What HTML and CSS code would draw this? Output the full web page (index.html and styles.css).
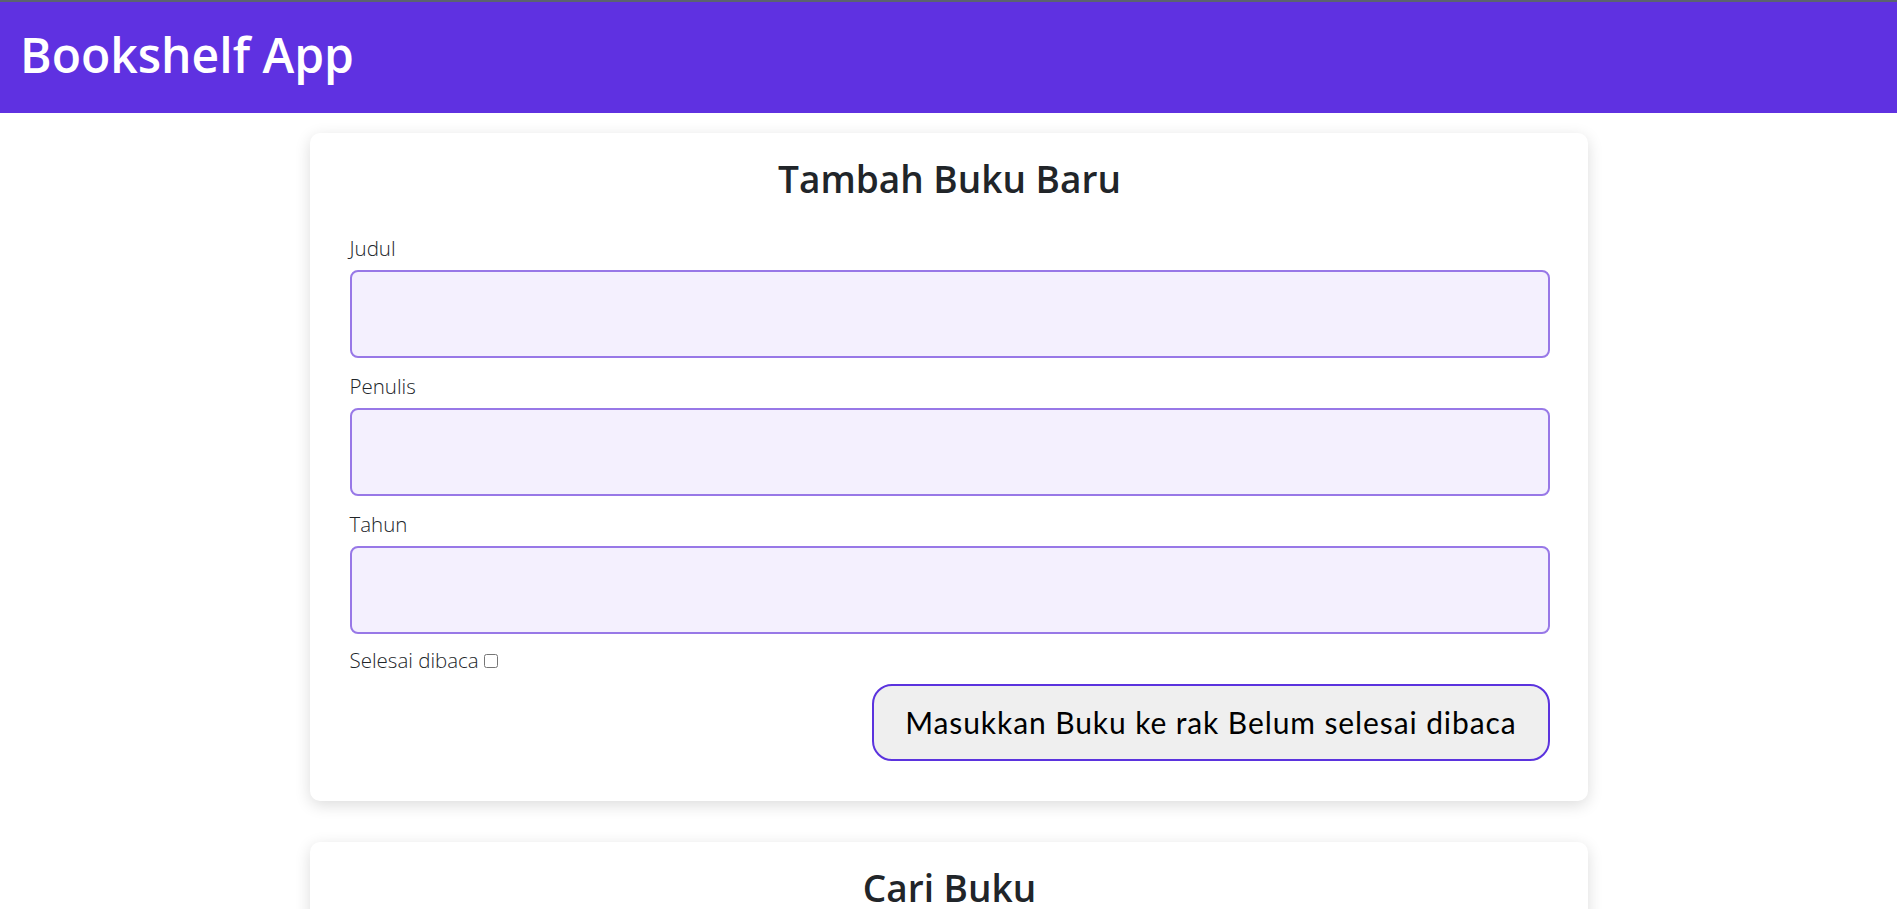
FILE: index.html
```html
<!DOCTYPE html>
<html lang="id">
<head>
<meta charset="utf-8">
<title>Bookshelf App</title>
<link rel="stylesheet" href="styles.css">
</head>
<body>
<header class="app-header">
  <h1 class="app-title">Bookshelf App</h1>
</header>
<main class="content">
  <section class="card">
    <h2 class="card-title">Tambah Buku Baru</h2>
    <form class="book-form">
      <div class="field">
        <label class="field-label" for="inputBookTitle">Judul</label>
        <input class="field-input" id="inputBookTitle" type="text">
      </div>
      <div class="field">
        <label class="field-label" for="inputBookAuthor">Penulis</label>
        <input class="field-input" id="inputBookAuthor" type="text">
      </div>
      <div class="field">
        <label class="field-label" for="inputBookYear">Tahun</label>
        <input class="field-input" id="inputBookYear" type="number">
      </div>
      <div class="check-row">
        <label class="field-label" for="inputBookIsComplete">Selesai dibaca</label>
        <input class="check" id="inputBookIsComplete" type="checkbox">
      </div>
      <div class="actions">
        <button class="submit-btn" type="button">Masukkan Buku ke rak Belum selesai dibaca</button>
      </div>
    </form>
  </section>
  <section class="card">
    <h2 class="card-title">Cari Buku</h2>
    <form class="book-form">
      <div class="field">
        <label class="field-label" for="searchBookTitle">Judul</label>
        <input class="field-input" id="searchBookTitle" type="text">
      </div>
      <div class="actions">
        <button class="submit-btn" type="button">Cari</button>
      </div>
    </form>
  </section>
</main>
</body>
</html>
```

FILE: styles.css
```css
html, body {
  margin: 0;
  padding: 0;
}

body {
  font-family: "Open Sans", "Noto Sans", sans-serif;
  color: #212529;
  background: #ffffff;
}

.app-header {
  background: #5f31e1;
  border-top: 2px solid #5b6270;
  padding: 24px 20px 30px;
}

.app-title {
  margin: 0;
  color: #ffffff;
  font-size: 48px;
  font-weight: 600;
  line-height: 57px;
}

.content {
  padding: 20px 0 40px;
  display: flex;
  flex-direction: column;
  gap: 41px;
}

.card {
  width: 1278px;
  box-sizing: border-box;
  margin: 0 auto;
  background: #ffffff;
  border-radius: 10px;
  box-shadow: 0 4px 16px rgba(0, 0, 0, 0.14);
  padding: 24px 38px 40px 40px;
}

.card-title {
  margin: 0;
  text-align: center;
  font-size: 37px;
  font-weight: 600;
  line-height: 44px;
  color: #212529;
}

.book-form {
  margin-top: 33px;
  display: flex;
  flex-direction: column;
}

.field {
  display: flex;
  flex-direction: column;
  gap: 8px;
}

.field + .field {
  margin-top: 14px;
}

.field-label {
  font-size: 20.5px;
  font-weight: 300;
  line-height: 28px;
  color: #212529;
}

.field-input {
  display: block;
  width: 100%;
  height: 88px;
  box-sizing: border-box;
  margin: 0;
  border: 2px solid #9878e7;
  border-radius: 8px;
  background: #f4f0fe;
  font-family: "Open Sans", sans-serif;
  font-size: 20px;
  padding: 0 12px;
}

.check-row {
  margin-top: 12px;
  display: flex;
  align-items: center;
  gap: 5px;
}

.check {
  width: 14px;
  height: 14px;
  margin: 2px 0 0;
}

.actions {
  margin-top: 10px;
  display: flex;
  justify-content: flex-end;
}

.submit-btn {
  font-family: "Lato", "Open Sans", sans-serif;
  font-size: 30px;
  line-height: 36px;
  font-weight: 400;
  letter-spacing: 0.9px;
  color: #000000;
  background: #efefef;
  border: 2px solid #5b33de;
  border-radius: 20px;
  padding: 18px 31px 19px;
  margin: 0;
}
```
